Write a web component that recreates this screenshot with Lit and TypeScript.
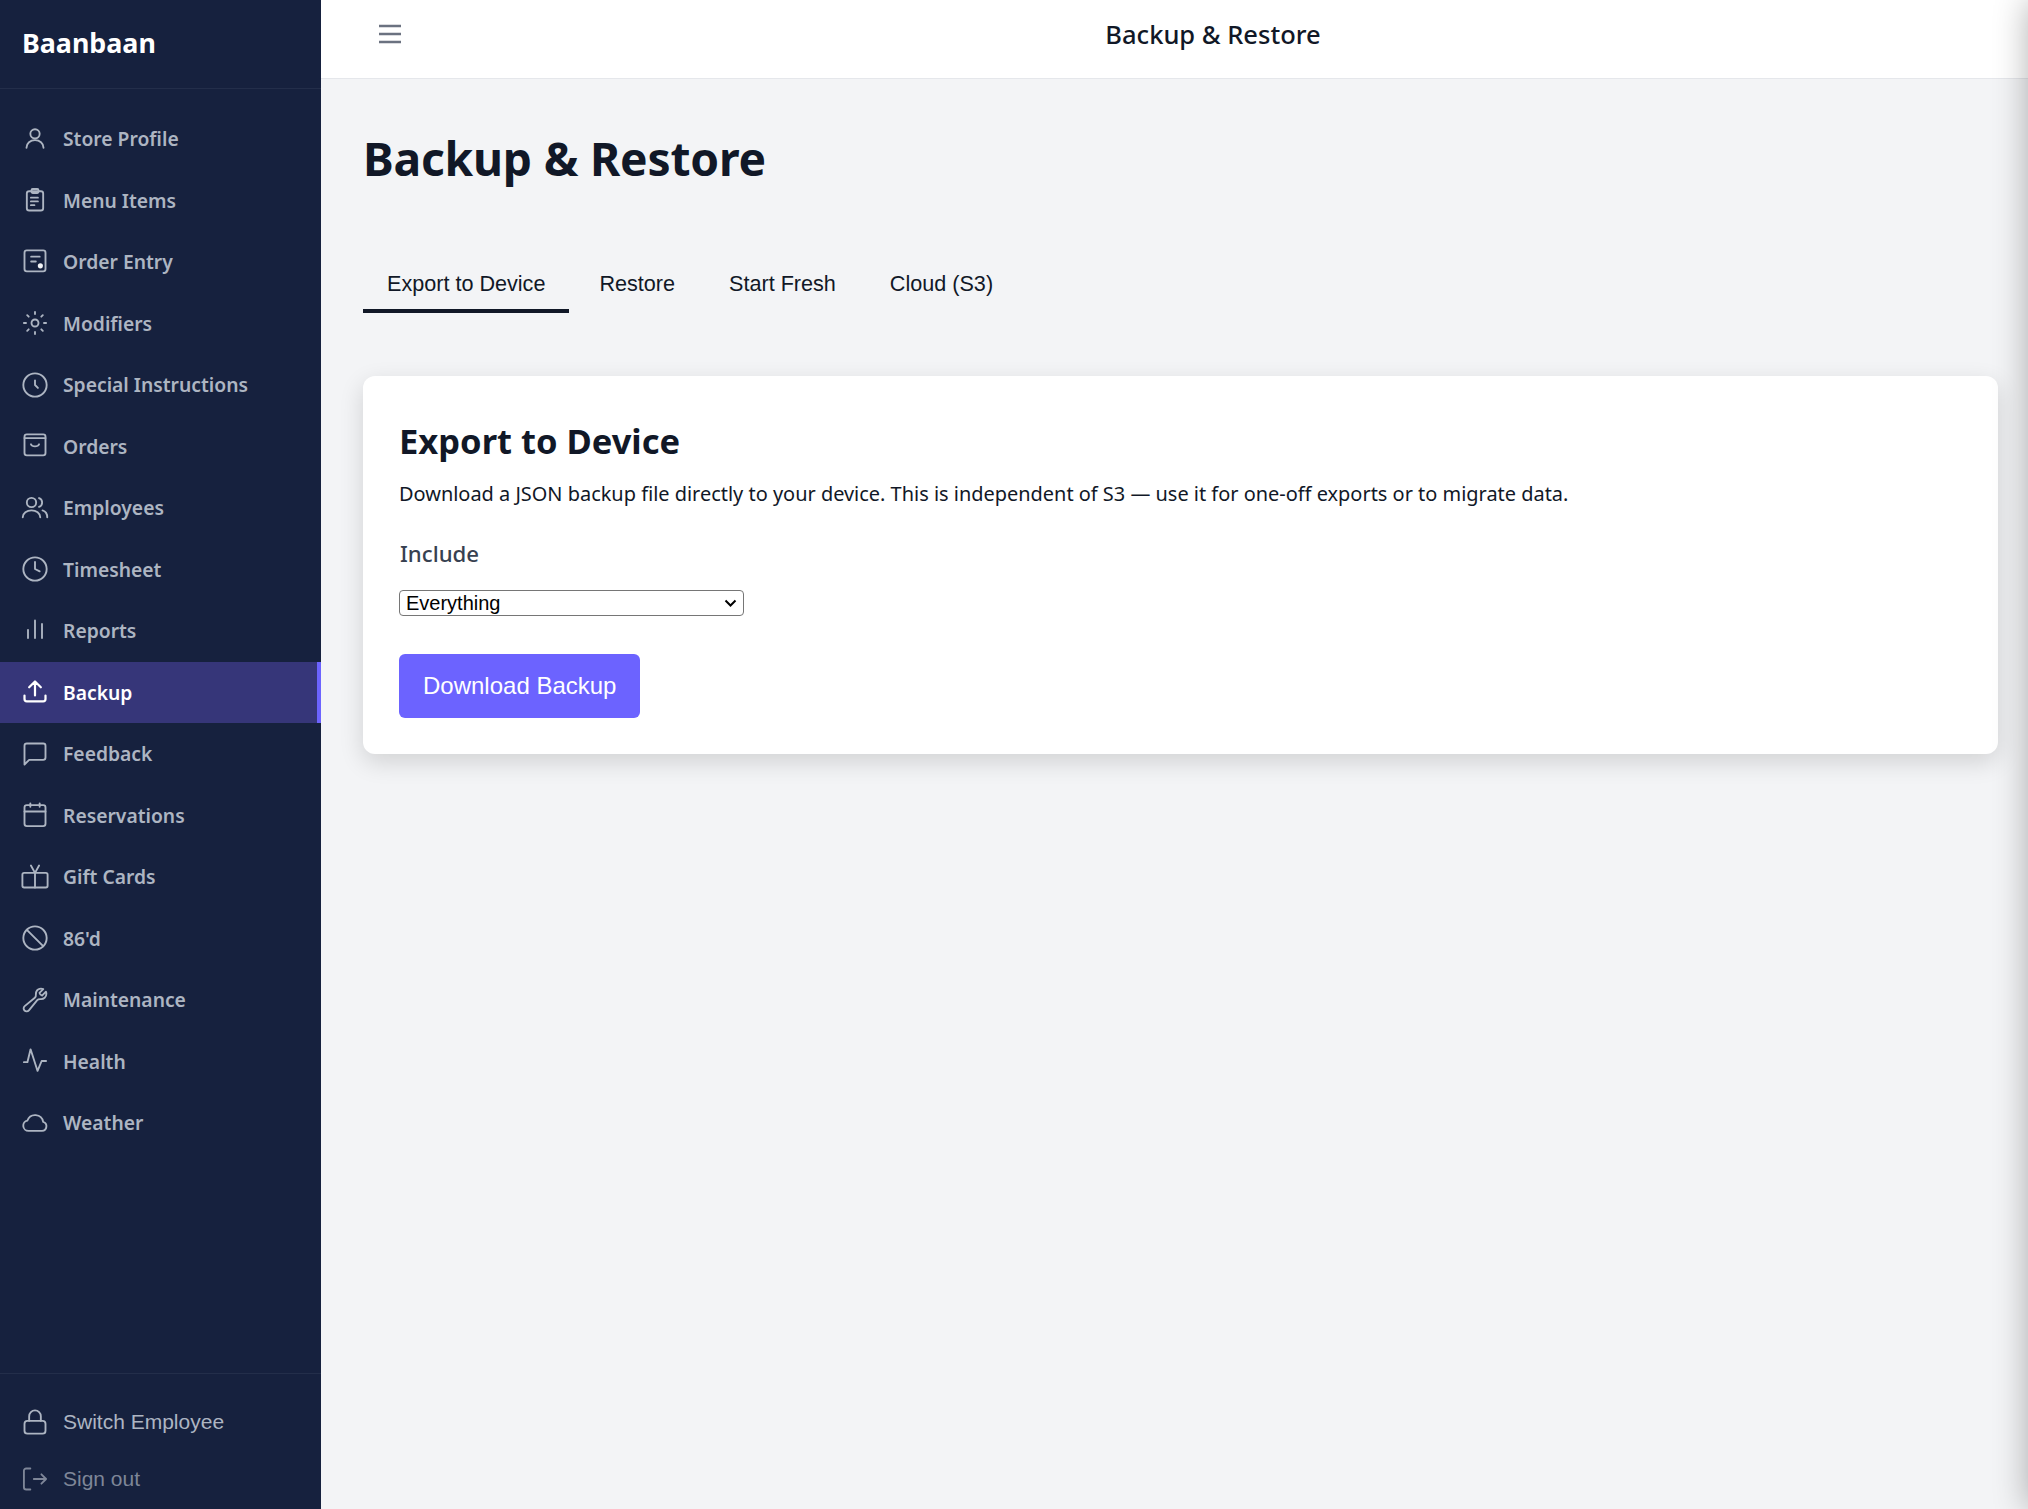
import { LitElement, html, css, svg } from 'lit';
import { customElement, state } from 'lit/decorators.js';

const ICONS: Record<string, unknown> = {
  user: svg`<circle cx="12" cy="7.6" r="4"/><path d="M4.7 19.5c0-4 3.3-6.5 7.3-6.5s7.3 2.5 7.3 6.5"/>`,
  clipboard: svg`<rect x="5" y="4.5" width="14" height="16.5" rx="2"/><rect x="9" y="2.6" width="6" height="3.4" rx="1"/><path d="M8.5 10h6M8.5 13.2h6M8.5 16.4h3"/>`,
  entry: svg`<rect x="3" y="2" width="18" height="18" rx="2"/><path d="M8.7 7.4H16M8.7 11.6h4"/><circle class="solid" cx="16.6" cy="15.3" r="2.2"/>`,
  sun: svg`<circle cx="12" cy="12" r="3"/><path d="M12 2.5v1.8M12 19.7v1.8M2.5 12h1.8M19.7 12h1.8M5.3 5.3l1.3 1.3M17.4 17.4l1.3 1.3M5.3 18.7l1.3-1.3M17.4 6.6l1.3-1.3"/>`,
  clockSmall: svg`<circle cx="12" cy="12" r="10"/><path d="M12 8v4l2.5 2.5"/>`,
  bag: svg`<rect x="3" y="2" width="18" height="18" rx="2"/><path d="M3 5.2h18M8.5 10.5c1 2.4 6 2.4 7 0"/>`,
  users: svg`<circle cx="9" cy="7.3" r="4"/><path d="M1.5 20c0-3.5 3.5-6 7.5-6s7.5 2.5 7.5 6M15.5 3.5a4 4 0 0 1 0 7.5M18.5 14c2.5.8 4 3 4 6"/>`,
  clock: svg`<circle cx="12" cy="12" r="10"/><path d="M12 6v6l4 2"/>`,
  bars: svg`<path d="M6 18v-7M12 18V3M18 18V6"/>`,
  upload: svg`<path d="M3 15v3a2 2 0 0 0 2 2h14a2 2 0 0 0 2-2v-3M7 8l5-5 5 5M12 3v12"/>`,
  chat: svg`<path d="M3 21V5a2 2 0 0 1 2-2h14a2 2 0 0 1 2 2v10a2 2 0 0 1-2 2H7l-4 4z"/>`,
  calendar: svg`<rect x="3" y="3.5" width="18" height="18" rx="2"/><path d="M8 2v3M16 2v3M3 9h18"/>`,
  gift: svg`<rect x="1.2" y="8.5" width="21.6" height="12.5" rx="1.5"/><path d="M12 8.5V21M8.5 2.2 12 8.5l3.5-6.3"/>`,
  ban: svg`<circle cx="12" cy="12" r="10"/><path d="M5 5l14 14"/>`,
  wrench: svg`<path d="M21.75 6.75a4.5 4.5 0 0 1-4.884 4.484c-1.076-.091-2.264.071-2.95.904l-7.152 8.684a2.548 2.548 0 1 1-3.586-3.586l8.684-7.152c.833-.686.995-1.874.904-2.95a4.5 4.5 0 0 1 6.336-4.486l-3.276 3.276a3.004 3.004 0 0 0 2.25 2.25l3.276-3.276c.256.565.398 1.192.398 1.852Z"/>`,
  pulse: svg`<path d="M2.5 13h3L8.2 2l6 18.5 3.5-8.5h3.8"/>`,
  cloud: svg`<path d="M6.5 18.8H18a4 4 0 0 0 1-7.8A7 7 0 0 0 5.5 9.9a4.5 4.5 0 0 0 1 8.9z"/>`,
  lock: svg`<path d="M7 11V7a5 5 0 0 1 10 0v4"/><rect x="3" y="11" width="18" height="11" rx="2.5"/>`,
  signout: svg`<path d="M8 3H4.5a2 2 0 0 0-2 2v14a2 2 0 0 0 2 2H8M11 12h10.5M17.5 8l4 4-4 4"/>`,
};

const NAV = [
  ['user', 'Store Profile'],
  ['clipboard', 'Menu Items'],
  ['entry', 'Order Entry'],
  ['sun', 'Modifiers'],
  ['clockSmall', 'Special Instructions'],
  ['bag', 'Orders'],
  ['users', 'Employees'],
  ['clock', 'Timesheet'],
  ['bars', 'Reports'],
  ['upload', 'Backup'],
  ['chat', 'Feedback'],
  ['calendar', 'Reservations'],
  ['gift', 'Gift Cards'],
  ['ban', "86'd"],
  ['wrench', 'Maintenance'],
  ['pulse', 'Health'],
  ['cloud', 'Weather'],
];

const TABS = ['Export to Device', 'Restore', 'Start Fresh', 'Cloud (S3)'];

@customElement('app-root')
export class AppRoot extends LitElement {
  static styles = css`
    :host {
      display: flex;
      height: 100vh;
      position: relative;
      overflow: hidden;
      background: #f3f4f6;
      color: #111827;
      font-family: 'Noto Sans', 'Open Sans', sans-serif;
    }

    .sidebar {
      width: 321px;
      flex: none;
      display: flex;
      flex-direction: column;
      background: #16213e;
    }

    .brand {
      height: 89px;
      box-sizing: border-box;
      padding: 0 22px 4px;
      display: flex;
      align-items: center;
      border-bottom: 1px solid #232e4a;
      color: #fff;
      font-size: 26.8px;
      font-weight: 700;
    }

    .nav {
      flex: 1;
      padding-top: 19px;
    }

    .item {
      height: 61.5px;
      display: flex;
      align-items: center;
      gap: 14.5px;
      padding-left: 20.5px;
      font-size: 19.3px;
      font-weight: 600;
      color: #adb5c2;
    }

    .item.active {
      background: #363679;
      color: #fff;
      box-shadow: inset -4px 0 0 #6c63ff;
    }

    .item.active .icon {
      stroke-width: 1.9;
    }

    .icon {
      width: 28px;
      height: 28px;
      flex: none;
      fill: none;
      stroke: currentColor;
      stroke-width: 1.6;
      stroke-linecap: round;
      stroke-linejoin: round;
    }

    .icon .solid {
      fill: #f3f4f6;
      stroke: none;
    }

    .foot {
      border-top: 1px solid #232e4a;
      padding: 20px 0 2px;
    }

    .foot .item {
      height: 56.5px;
      font-family: 'Liberation Sans', Arial, sans-serif;
      font-size: 21px;
      font-weight: 400;
    }

    .foot .item.dim {
      color: #7e8698;
    }

    .content {
      flex: 1;
      min-width: 0;
      display: flex;
      flex-direction: column;
    }

    .topbar {
      height: 79px;
      flex: none;
      display: flex;
      align-items: center;
      padding: 0 4px 10px 57px;
      box-sizing: border-box;
      background: #fff;
      border-bottom: 1px solid #e5e7eb;
    }

    .burger {
      width: 24px;
      height: 24px;
      fill: none;
      stroke: #6b7280;
      stroke-width: 2.6;
    }

    .topbar-title {
      flex: 1;
      text-align: center;
      font-size: 25.5px;
      font-weight: 500;
    }

    .page {
      flex: 1;
      padding: 50px 30px 0 42px;
    }

    h1 {
      margin: 0;
      font-size: 46.2px;
      line-height: 60px;
      font-weight: 700;
      letter-spacing: -0.2px;
    }

    .tabs {
      display: flex;
      gap: 6px;
      margin-top: 64px;
      font-family: 'Liberation Sans', Arial, sans-serif;
      font-size: 21.6px;
    }

    .tab {
      padding: 7px 24px 0;
      height: 53px;
      line-height: 48px;
    }

    .tab.active {
      box-shadow: inset 0 -4px 0 #111827;
    }

    .card {
      margin-top: 63px;
      padding: 36px;
      background: #fff;
      border-radius: 12px;
      box-shadow: 0 8px 24px rgba(0, 0, 0, 0.14);
      box-sizing: border-box;
      height: 378px;
    }

    h2 {
      margin: 0;
      font-size: 34.5px;
      line-height: 58px;
      font-weight: 700;
    }

    .desc {
      margin: 9px 0 0;
      font-size: 19.95px;
      line-height: 30px;
    }

    .label {
      margin-top: 28px;
      padding-left: 1px;
      font-size: 22.2px;
      line-height: 33px;
      font-weight: 500;
      color: #374151;
    }

    .select-wrap {
      position: relative;
      margin-top: 20px;
      width: 345px;
      height: 26px;
    }

    select {
      display: block;
      appearance: none;
      box-sizing: border-box;
      width: 100%;
      height: 100%;
      padding: 0 0 0 6px;
      background: #fff;
      border: 1px solid #767676;
      border-radius: 4px;
      color: #000;
      font-family: 'Liberation Sans', Arial, sans-serif;
      font-size: 20px;
    }

    .chevron {
      position: absolute;
      right: 7px;
      top: 9px;
      width: 13px;
      height: 9px;
      fill: none;
      stroke: #000;
      stroke-width: 2;
    }

    .btn {
      display: block;
      margin-top: 38px;
      padding: 0 24px;
      height: 64px;
      border: 0;
      border-radius: 6px;
      background: #6c63ff;
      color: #fff;
      font-family: 'Liberation Sans', Arial, sans-serif;
      font-size: 24px;
    }

    .edge {
      position: absolute;
      top: 0;
      bottom: 0;
      left: 100%;
      width: 300px;
      box-shadow: 0 0 32px rgba(0, 0, 0, 0.3);
    }
  `;

  @state()
  private activeTab = 0;

  private icon(name: string) {
    return html`<svg class="icon" viewBox="0 0 24 24">${ICONS[name]}</svg>`;
  }

  render() {
    return html`
      <aside class="sidebar">
        <div class="brand">Baanbaan</div>
        <nav class="nav">
          ${NAV.map(
            ([icon, label]) => html`
              <div class="item ${label === 'Backup' ? 'active' : ''}">
                ${this.icon(icon)}<span>${label}</span>
              </div>
            `
          )}
        </nav>
        <div class="foot">
          <div class="item">${this.icon('lock')}<span>Switch Employee</span></div>
          <div class="item dim">${this.icon('signout')}<span>Sign out</span></div>
        </div>
      </aside>
      <div class="content">
        <header class="topbar">
          <svg class="burger" viewBox="0 0 24 24"><path d="M1 4h22M1 12h22M1 20h22" /></svg>
          <div class="topbar-title">Backup &amp; Restore</div>
        </header>
        <main class="page">
          <h1>Backup &amp; Restore</h1>
          <div class="tabs">
            ${TABS.map(
              (tab, i) => html`
                <div class="tab ${i === this.activeTab ? 'active' : ''}">${tab}</div>
              `
            )}
          </div>
          <section class="card">
            <h2>Export to Device</h2>
            <p class="desc">
              Download a JSON backup file directly to your device. This is independent of S3 — use
              it for one-off exports or to migrate data.
            </p>
            <div class="label">Include</div>
            <div class="select-wrap">
              <select><option>Everything</option></select>
              <svg class="chevron" viewBox="0 0 13 9"><path d="M1.5 1.5 6.5 6.5 11.5 1.5" /></svg>
            </div>
            <button class="btn">Download Backup</button>
          </section>
        </main>
      </div>
      <div class="edge"></div>
    `;
  }
}
